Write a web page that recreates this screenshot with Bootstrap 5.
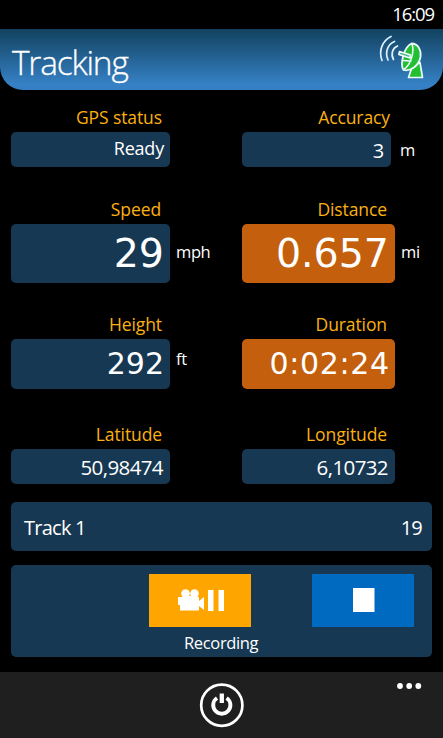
<!DOCTYPE html>
<html lang="en">
<head>
<meta charset="utf-8">
<meta name="viewport" content="width=device-width, initial-scale=1">
<title>Tracking</title>
<link href="https://cdn.jsdelivr.net/npm/bootstrap@5.3.0/dist/css/bootstrap.min.css" rel="stylesheet">
<style>
body{background:#000;color:#fff;font-family:"Open Sans","Noto Sans",sans-serif;height:738px;overflow:hidden}
svg{display:block}
.clock{height:29px;font-size:18.5px;line-height:28px;padding-right:9px;letter-spacing:-1.1px}
.top-head{height:61px;padding:0 17px 0 12px;background:linear-gradient(#12425f,#3580c4 90%);border-radius:0 0 23px 23px}
.top-head h1{font-size:33.5px;font-weight:300;line-height:66px;letter-spacing:-1.2px;-webkit-text-stroke:.3px #fff}
.readings{height:412px;padding:15px 0 0 11px}
.field-l{width:231px}
.field-r{width:201px}
.field-l .cap,.field-l .val{width:159px}
.field-r .cap,.field-r .val{width:153px}
.field-r.acc .cap,.field-r.acc .val{width:149px}
.cap{font-size:17.5px;line-height:25px;margin-bottom:2px;padding-right:8px;color:#fbb012;letter-spacing:-.1px}
.field-r.acc .cap{padding-right:1px}
.val{background:#173853;border-radius:5px;padding-right:6px;height:35px;font-size:18px;line-height:33px;letter-spacing:-.2px}
.acc .val{font-size:20px;line-height:37px;padding-right:7px}
.val.hot{background:#c35f0d}
.r1{height:92px}.r2{height:115px}.r3{height:110px}.r4{height:80px}
.r2 .val{height:59px;font-family:"DejaVu Sans",sans-serif;font-size:39.5px;line-height:58px;letter-spacing:0}
.r3 .val{height:50px;font-family:"DejaVu Sans",sans-serif;font-size:30px;line-height:49px;letter-spacing:0}
.r4 .val{font-size:20.5px;line-height:36px;letter-spacing:-.6px;padding-right:7px}
.r2 .field-l .cap{padding-right:9px}
.unit{font-size:16.5px;margin-left:6px;line-height:35px;letter-spacing:-.4px}
.r2 .unit{line-height:55px}
.r3 .unit{line-height:39px}
.acc .unit{margin-left:9px}
.r3 .s-dur{letter-spacing:.65px;margin-right:-.65px}
.blue-panel{background:#173853;border-radius:5px;margin:0 11px}
.track{height:49px;font-size:20px;padding:2px 10px 0 13px;letter-spacing:-.75px}
.controls{height:92px;margin-top:14px;padding:9px 18px 0 138px}
.tile{width:102px;height:53px;border-radius:0}
.tile-rec{background:#ffa500}
.tile-stop{background:#006ac1}
.rec-label{font-size:16.5px;line-height:24px;margin:4px 0 0 35px;letter-spacing:-.35px}
.app-bar{height:66px;margin-top:15px;padding-top:10px;background:#1f1f1f}
.dots{right:21px;top:10px}
</style>
</head>
<body>
<div class="clock text-end">16:09</div>
<header class="top-head d-flex justify-content-between">
<h1 class="m-0">Tracking</h1>
<svg width="48" height="48" viewBox="378 33 48 48" class="mt-1" fill="none" stroke-linecap="round" stroke-linejoin="round">
<g stroke="#dff2ff" stroke-width="1.7"><path d="M391 36.500C382 41 378.500 51 382 60.500"/><path d="M394.500 41.500C387 44.500 385 53 388 60"/><path d="M397.500 46C392.500 48 390.500 54 393.500 59.500"/></g>
<path d="M412 67 420 62.500 422.500 77.500H408.500Z" fill="#25c032" stroke="#eafaff" stroke-width="1.700"/>
<path d="M411.500 43.500C418 43.500 421.500 50 420.500 57C419 65 411 72 403.500 70C400.500 66 402 60 403.500 54.500C405.500 48.500 408.500 45 411.500 43.500Z" fill="#25c032" stroke="#eafaff" stroke-width="1.800"/>
<path d="M412 44C414.500 51 411.500 64 404 69.500M402.500 60.500 411 61" stroke="#eafaff" stroke-width="1.500"/>
<path d="M399.500 51.500 410.500 55 410 58 398.800 54.500Z" fill="#4fb98c" stroke="#f2fcff" stroke-width="1.600"/>
</svg>
</header>
<main>
<section class="readings">
<div class="d-flex r1">
<div class="field-l"><div class="cap text-end">GPS status</div><div class="val text-end">Ready</div></div>
<div class="field-r acc"><div class="cap text-end">Accuracy</div><div class="d-flex"><div class="val text-end">3</div><span class="unit">m</span></div></div>
</div>
<div class="d-flex r2">
<div class="field-l"><div class="cap text-end">Speed</div><div class="d-flex"><div class="val text-end">29</div><span class="unit">mph</span></div></div>
<div class="field-r"><div class="cap text-end">Distance</div><div class="d-flex"><div class="val hot text-end">0.657</div><span class="unit">mi</span></div></div>
</div>
<div class="d-flex r3">
<div class="field-l"><div class="cap text-end">Height</div><div class="d-flex"><div class="val text-end">292</div><span class="unit">ft</span></div></div>
<div class="field-r"><div class="cap text-end">Duration</div><div class="val hot text-end"><span class="s-dur">0:02:24</span></div></div>
</div>
<div class="d-flex r4">
<div class="field-l"><div class="cap text-end">Latitude</div><div class="val text-end">50,98474</div></div>
<div class="field-r"><div class="cap text-end">Longitude</div><div class="val text-end">6,10732</div></div>
</div>
</section>
<section class="blue-panel track d-flex align-items-center justify-content-between"><span>Track 1</span><span>19</span></section>
<section class="blue-panel controls">
<div class="d-flex justify-content-between">
<button class="tile tile-rec btn border-0 p-0" aria-label="Pause recording"><svg width="102" height="53" viewBox="0 0 102 53" fill="#fff"><circle cx="36.500" cy="19.500" r="4.300"/><circle cx="45.500" cy="19.500" r="4.300"/><path d="M29 23h21v4l5-4v13l-5-4v4.500H31V31h-2zM36 22h10v3H36zM59 16h5.500v21H59zM69.500 16h5.500v21h-5.500z"/></svg></button>
<button class="tile tile-stop btn border-0 p-0" aria-label="Stop"><svg width="102" height="53" viewBox="0 0 102 53"><path fill="#fff" d="M41 14h21.500v24H41z"/></svg></button>
</div>
<div class="rec-label">Recording</div>
</section>
</main>
<footer class="app-bar position-relative d-flex justify-content-center">
<svg width="46" height="46" viewBox="0 0 46 46" fill="none" stroke="#fff"><circle cx="22.800" cy="23.200" r="20.600" stroke-width="2.700"/><path d="M18 16A8.600 8.600 0 1 0 27.600 16" stroke-width="3.900"/><path d="M22.800 11.500V21" stroke-width="4.300"/></svg>
<svg class="dots position-absolute" width="26" height="8" viewBox="0 0 26 8" fill="#fff"><circle cx="4" cy="4" r="2.900"/><circle cx="13.200" cy="4" r="2.900"/><circle cx="22.300" cy="4" r="2.900"/></svg>
</footer>
<script src="https://cdn.jsdelivr.net/npm/bootstrap@5.3.0/dist/js/bootstrap.bundle.min.js"></script>
</body>
</html>
